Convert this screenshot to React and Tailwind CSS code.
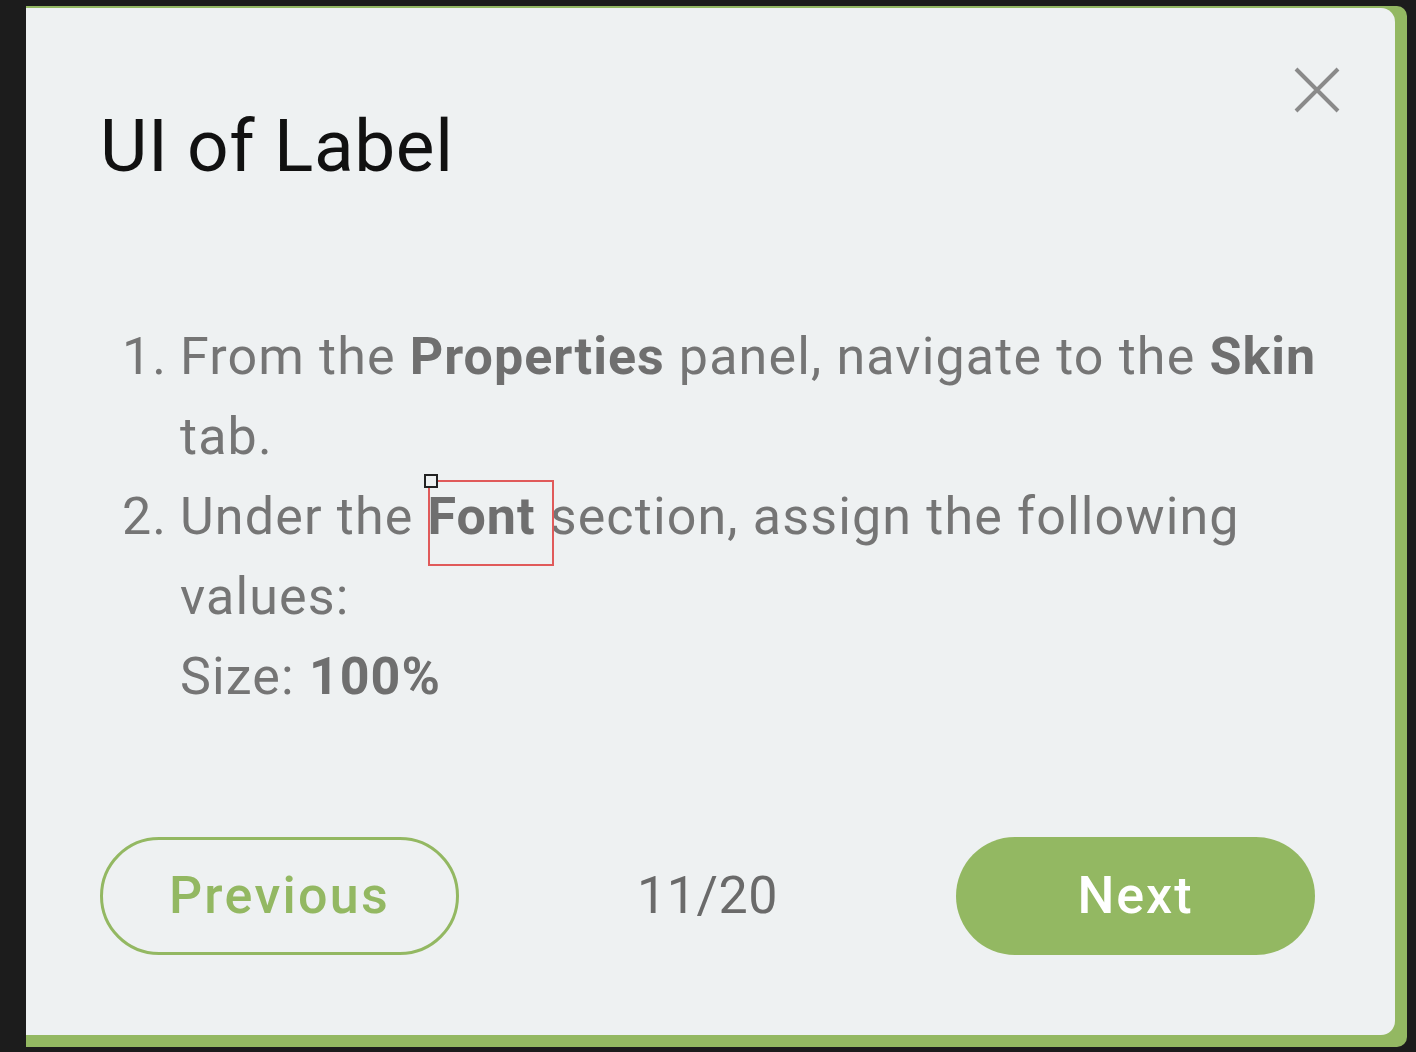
import React from 'react';

const font = { fontFamily: 'Roboto, "Liberation Sans", sans-serif' };

export default function App() {
  return (
    <div className="min-h-screen bg-[#1c1c1c] pl-[26px] pt-[6px] pr-[9px] pb-[5px]" style={font}>
      <div className="bg-[#93b862] pt-[2px] pr-[12px] pb-[12px] rounded-r-[10px] h-[1041px]">
        <div className="relative h-full bg-[#eef1f2] rounded-r-[14px] pl-[74px] pr-[80px] flex flex-col">
          {/* close */}
          <button className="absolute left-[1267px] top-[58px] w-[48px] h-[48px]">
            <svg viewBox="0 0 48 48" className="w-full h-full" fill="none" stroke="#8a8a8a" strokeWidth="4">
              <path d="M3 3 L45 45 M45 3 L3 45" />
            </svg>
          </button>

          <h1 className="mt-[102px] text-[73px] leading-[73px] font-normal tracking-[0.6px] text-[#111]">UI of Label</h1>

          <div className="mt-[134px] mr-[-24px] text-[52px] leading-[80px] tracking-[1.15px] text-[#757575]">
            <div className="flex">
              <span className="w-[58px] pl-[22px] shrink-0">1.</span>
              <div className="pl-[22px]">
                From the <b className="font-bold text-[#6f6f6f] tracking-[1px]">Properties</b> panel, navigate to the <b className="font-bold text-[#6f6f6f] tracking-[1px]">Skin</b> tab.
              </div>
            </div>
            <div className="flex">
              <span className="w-[58px] pl-[22px] shrink-0">2.</span>
              <div className="pl-[22px]">
                <div>
                  Under the <b className="font-bold text-[#6f6f6f] tracking-[1px]">Font</b> section, assign the following values:
                </div>
                <div>
                  Size: <b className="font-bold text-[#6f6f6f] tracking-[1px]">100%</b>
                </div>
              </div>
            </div>
          </div>

          {/* selection overlay */}
          <div className="absolute left-[402px] top-[472px] w-[126px] h-[86px] border-2 border-[#e05a5a]" />
          <div className="absolute left-[398px] top-[466px] w-[14px] h-[14px] border-2 border-[#222] bg-[#eef1f2]" />

          <div className="mt-[120px] flex items-center justify-between">
            <button className="w-[359px] h-[118px] rounded-full border-[3px] border-[#93b862] text-[#93b862] text-[52px] font-medium tracking-[2.3px]">
              Previous
            </button>
            <span className="text-[52px] tracking-[0.5px] text-[#6a6a6a]">11/20</span>
            <button className="w-[359px] h-[118px] rounded-full bg-[#93b862] text-white text-[52px] font-medium tracking-[2px]">
              Next
            </button>
          </div>
        </div>
      </div>
    </div>
  );
}
